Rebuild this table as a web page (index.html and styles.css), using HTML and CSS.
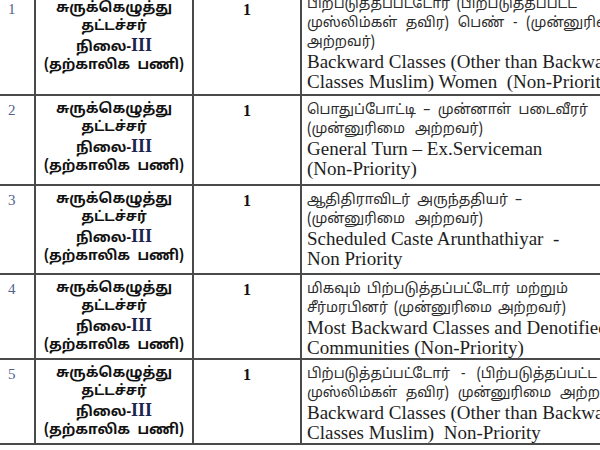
FILE: index.html
```html
<!DOCTYPE html>
<html lang="ta">
<head>
<meta charset="utf-8">
<title>பணியிடங்கள்</title>
<link rel="stylesheet" href="styles.css">
</head>
<body>
<div class="sheet">
  <div class="cell num">1</div>
  <div class="cell post"><span class="ln">சுருக்கெழுத்து</span><span class="ln">தட்டச்சர்</span><span class="ln">நிலை-<b class="roman">III</b></span><span class="ln">(தற்காலிக&nbsp;&nbsp;பணி)</span></div>
  <div class="cell count">1</div>
  <div class="cell desc desc-first">
    <div class="ta fill w-270"><span>பிற்படுத்தப்பட்டோர்</span><span>(பிற்படுத்தப்பட்ட</span></div>
    <div class="ta">முஸ்லிம்கள் தவிர) பெண் - (முன்னுரிமை</div>
    <div class="ta">அற்றவர்)</div>
    <div class="en">Backward Classes (Other than Backward</div>
    <div class="en">Classes Muslim) Women&nbsp; (Non-Priority)</div>
  </div>

  <div class="cell num">2</div>
  <div class="cell post"><span class="ln">சுருக்கெழுத்து</span><span class="ln">தட்டச்சர்</span><span class="ln">நிலை-<b class="roman">III</b></span><span class="ln">(தற்காலிக&nbsp;&nbsp;பணி)</span></div>
  <div class="cell count">1</div>
  <div class="cell desc">
    <div class="ta fill w-281"><span>பொதுப்போட்டி</span><span>–</span><span>முன்னாள்</span><span>படைவீரர்</span></div>
    <div class="ta fill w-176"><span>(முன்னுரிமை</span><span>அற்றவர்)</span></div>
    <div class="en">General Turn – Ex.Serviceman</div>
    <div class="en">(Non-Priority)</div>
  </div>

  <div class="cell num">3</div>
  <div class="cell post"><span class="ln">சுருக்கெழுத்து</span><span class="ln">தட்டச்சர்</span><span class="ln">நிலை-<b class="roman">III</b></span><span class="ln">(தற்காலிக&nbsp;&nbsp;பணி)</span></div>
  <div class="cell count">1</div>
  <div class="cell desc">
    <div class="ta fill w-215"><span>ஆதிதிராவிடர்</span><span>அருந்ததியர்</span><span>–</span></div>
    <div class="ta fill w-176"><span>(முன்னுரிமை</span><span>அற்றவர்)</span></div>
    <div class="en">Scheduled Caste Arunthathiyar&nbsp; -</div>
    <div class="en">Non Priority</div>
  </div>

  <div class="cell num">4</div>
  <div class="cell post"><span class="ln">சுருக்கெழுத்து</span><span class="ln">தட்டச்சர்</span><span class="ln">நிலை-<b class="roman">III</b></span><span class="ln">(தற்காலிக&nbsp;&nbsp;பணி)</span></div>
  <div class="cell count">1</div>
  <div class="cell desc">
    <div class="ta fill w-258"><span>மிகவும்</span><span>பிற்படுத்தப்பட்டோர்</span><span>மற்றும்</span></div>
    <div class="ta fill w-255"><span>சீர்மரபினர்</span><span>(முன்னுரிமை</span><span>அற்றவர்)</span></div>
    <div class="en">Most Backward Classes and Denotified</div>
    <div class="en">Communities (Non-Priority)</div>
  </div>

  <div class="cell num">5</div>
  <div class="cell post"><span class="ln">சுருக்கெழுத்து</span><span class="ln">தட்டச்சர்</span><span class="ln">நிலை-<b class="roman">III</b></span><span class="ln">(தற்காலிக&nbsp;&nbsp;பணி)</span></div>
  <div class="cell count">1</div>
  <div class="cell desc">
    <div class="ta fill w-290"><span>பிற்படுத்தப்பட்டோர்</span><span>-</span><span>(பிற்படுத்தப்பட்ட</span></div>
    <div class="ta">முஸ்லிம்கள் தவிர) முன்னுரிமை அற்றவர்</div>
    <div class="en">Backward Classes (Other than Backward</div>
    <div class="en">Classes Muslim)&nbsp; Non-Priority</div>
  </div>
</div>
</body>
</html>
```
FILE: styles.css
```css
html, body {
  margin: 0;
  padding: 0;
  background: #ffffff;
  overflow: hidden;
}

body {
  width: 600px;
  height: 450px;
  font-family: "Liberation Serif", "Times New Roman", serif;
  color: #1c1c1c;
}

.sheet {
  display: grid;
  grid-template-columns: 36px 158px 108px 340px;
  grid-template-rows: 101px 90px 89px 85px 85px;
  margin-top: -5px;
  width: 642px;
}

.cell {
  box-sizing: border-box;
  border-right: 2px solid #4a4a4a;
  border-bottom: 2px solid #4a4a4a;
  overflow: hidden;
}

.num {
  padding: 5px 0 0 8px;
  font-size: 15px;
  line-height: 18px;
  color: #56618a;
}

.post {
  display: flex;
  flex-direction: column;
  align-items: center;
  padding-top: 5px;
  font-family: "Noto Sans Tamil", "Lohit Tamil", "Latha", "Noto Sans", sans-serif;
  font-weight: 700;
  font-size: 14px;
  line-height: 18px;
  color: #111;
}

.ln {
  display: block;
  white-space: nowrap;
}

.roman {
  font-family: "Liberation Serif", "Times New Roman", serif;
  font-size: 18px;
  font-weight: 700;
  color: #1b2451;
}

.count {
  text-align: center;
  padding-top: 6px;
  font-weight: 700;
  font-size: 16px;
  line-height: 18px;
  color: #111;
}

.desc {
  border-right: none;
  padding: 5px 0 0 5px;
}

.desc-first {
  padding-top: 0;
}

.ta {
  white-space: nowrap;
  font-family: "Noto Sans Tamil", "Lohit Tamil", "Latha", "Noto Sans", sans-serif;
  font-size: 14px;
  line-height: 19px;
  word-spacing: 5px;
  color: #2c2c2c;
}

.fill {
  display: flex;
  justify-content: space-between;
  column-gap: 6px;
  word-spacing: normal;
}

.fill > span {
  flex: none;
}

.w-176 { width: 176px; }
.w-215 { width: 215px; }
.w-255 { width: 255px; }
.w-258 { width: 258px; }
.w-270 { width: 270px; }
.w-281 { width: 281px; }
.w-290 { width: 290px; }

.en {
  white-space: nowrap;
  font-family: "Liberation Serif", "Times New Roman", serif;
  font-size: 19px;
  line-height: 20px;
  color: #1e1e1e;
}
```
